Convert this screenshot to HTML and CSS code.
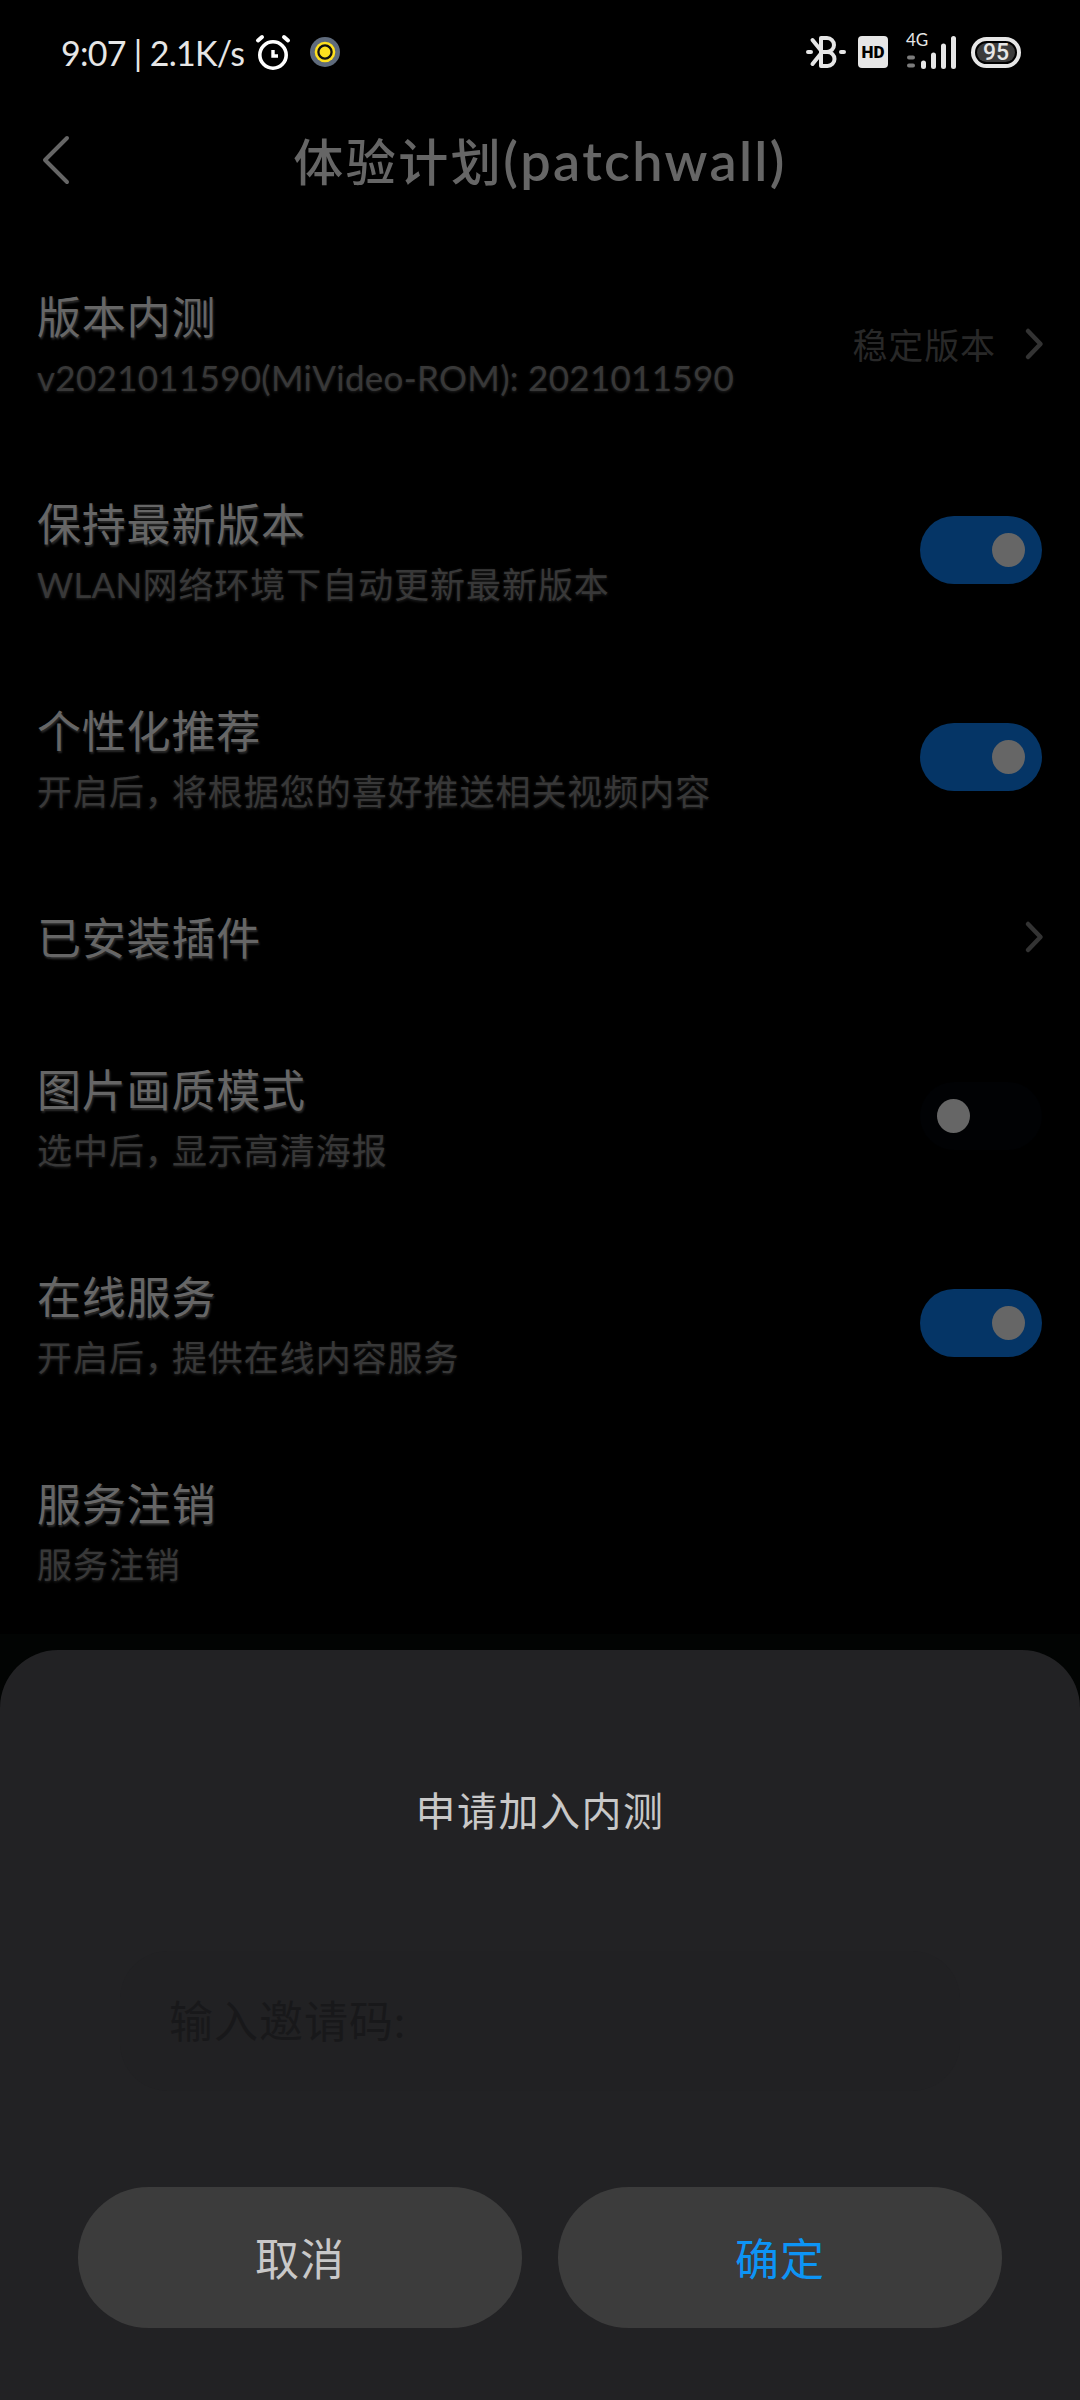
FILE: index.html
```html
<!DOCTYPE html>
<html lang="zh-CN">
<head>
    <meta charset="UTF-8">
    <meta name="viewport" content="width=device-width, initial-scale=1.0">
    <title>体验计划</title>
    <link rel="stylesheet" href="styles.css">
</head>
<body>
    <div class="status-bar">
        <span class="status-time">9:07 | 2.1K/s</span>
        <svg class="icon-alarm" width="36" height="38" viewBox="0 0 36 38" fill="none" stroke="#fff" stroke-linecap="round">
            <circle cx="18" cy="22" r="13.2" stroke-width="3.6"/>
            <path d="M3 7.5L7 4M33 7.5L29 4" stroke-width="4"/>
            <path d="M18 17v6h5" stroke-width="3.4" stroke-linecap="butt"/>
        </svg>
        <svg class="icon-app" width="30" height="30" viewBox="0 0 30 30">
            <circle cx="15" cy="15" r="15" fill="#5f6b7c"/>
            <circle cx="15" cy="15" r="10.3" fill="#ffe11f"/>
            <circle cx="15" cy="15" r="6.6" fill="#ffe11f" stroke="#111" stroke-width="2.3"/>
        </svg>
        <div class="status-icons">
            <svg width="40" height="34" viewBox="0 0 40 34" fill="none" stroke="#e6e6e6" stroke-width="4" stroke-linecap="round" stroke-linejoin="round">
                <path d="M6.5 5L15 15.500M6.500 29L15 18.500"/>
                <path d="M15 3v28h6.500a7 7 0 0 0 0-14H15M21 17a7 7 0 0 0 0-14H15"/>
                <path d="M2 17h3M35 17h3"/>
            </svg>
            <span class="hd">HD</span>
            <div class="signal">
                <span class="signal-type">4G</span>
                <svg width="50" height="34" viewBox="0 0 50 34" stroke="#e6e6e6" stroke-width="5" stroke-linecap="round">
                    <path d="M3 22.500h4M3 30.500h4" stroke="#7c7c7c" stroke-width="4"/>
                    <path d="M17.500 28v3.500M27.500 20v11.500M37.500 11v20.500M47.500 3.500v28"/>
                </svg>
            </div>
            <div class="battery"><span>95</span></div>
        </div>
    </div>

    <div class="header">
        <svg width="30" height="52" viewBox="0 0 30 52" fill="none" stroke="#666" stroke-width="4" stroke-linecap="round" stroke-linejoin="round">
            <path d="M26 4L4 26L26 48"/>
        </svg>
        <h1>体验计划<span class="latin">(patchwall)</span></h1>
    </div>

    <div class="settings">
        <div class="row">
            <div class="row-text">
                <div class="row-title">版本内测</div>
                <div class="row-desc version">v2021011590(MiVideo-ROM): 2021011590</div>
            </div>
            <div class="row-value">稳定版本</div>
            <svg class="arrow" width="20" height="34" viewBox="0 0 20 34"><path d="M4 4L16.500 17L4 30"/></svg>
        </div>
        <div class="row">
            <div class="row-text">
                <div class="row-title">保持最新版本</div>
                <div class="row-desc"><span class="wlan">WLAN</span>网络环境下自动更新最新版本</div>
            </div>
            <div class="toggle on"></div>
        </div>
        <div class="row">
            <div class="row-text">
                <div class="row-title">个性化推荐</div>
                <div class="row-desc">开启后<span class="comma">，</span>将根据您的喜好推送相关视频内容</div>
            </div>
            <div class="toggle on"></div>
        </div>
        <div class="row single">
            <div class="row-text">
                <div class="row-title">已安装插件</div>
            </div>
            <svg class="arrow" width="20" height="34" viewBox="0 0 20 34"><path d="M4 4L16.500 17L4 30"/></svg>
        </div>
        <div class="row">
            <div class="row-text">
                <div class="row-title">图片画质模式</div>
                <div class="row-desc">选中后<span class="comma">，</span>显示高清海报</div>
            </div>
            <div class="toggle"></div>
        </div>
        <div class="row">
            <div class="row-text">
                <div class="row-title">在线服务</div>
                <div class="row-desc">开启后<span class="comma">，</span>提供在线内容服务</div>
            </div>
            <div class="toggle on"></div>
        </div>
        <div class="row">
            <div class="row-text">
                <div class="row-title">服务注销</div>
                <div class="row-desc">服务注销</div>
            </div>
        </div>
    </div>

    <div class="sheet">
        <h2>申请加入内测</h2>
        <div class="code-input">输入邀请码:</div>
        <div class="buttons">
            <button class="btn">取消</button>
            <button class="btn confirm">确定</button>
        </div>
    </div>
</body>
</html>
```
FILE: styles.css
```css
* {
    box-sizing: border-box;
}

body {
    margin: 0;
    width: 1080px;
    height: 2400px;
    background-color: #020403;
    font-family: Lato, "Noto Sans CJK SC", sans-serif;
    color: #666;
    overflow: hidden;
    position: relative;
}

/* Status bar */
.status-bar {
    display: flex;
    align-items: center;
    height: 104px;
    padding: 0 59px 0 61px;
    background-color: #000;
    color: #e6e6e6;
}

.status-time {
    width: 194px;
    padding-top: 1px;
    font-size: 34px;
    line-height: 40px;
    letter-spacing: -0.7px;
    white-space: nowrap;
}

.icon-app {
    margin-left: 19px;
}

.status-icons {
    display: flex;
    align-items: center;
    margin-left: auto;
}

.hd {
    width: 30px;
    height: 32px;
    margin-left: 12px;
    border-radius: 4px;
    background-color: #e6e6e6;
    color: #000;
    font: 900 17px/32px Roboto, sans-serif;
    text-align: center;
}

.signal {
    position: relative;
    height: 34px;
    margin: 0 15px 0 18px;
}

.signal-type {
    position: absolute;
    left: 0;
    top: -5px;
    font-size: 17px;
    line-height: 20px;
}

.battery {
    display: flex;
    width: 50px;
    height: 31px;
    padding: 2px;
    border: 4px solid #e6e6e6;
    border-radius: 16px;
}

.battery span {
    flex: 1;
    border-radius: 10px;
    background-color: #3c3c3c;
    font: 500 23px/20px Roboto, sans-serif;
    text-align: center;
}

/* Page header */
.header {
    display: flex;
    align-items: center;
    height: 136px;
    padding: 0 41px 24px;
    background-color: #000;
}

.header h1 {
    flex: 1;
    margin: 0 30px 0 0;
    padding-top: 3px;
    font-size: 50px;
    font-weight: 500;
    line-height: 60px;
    letter-spacing: 2.5px;
    text-align: center;
    white-space: nowrap;
}

.header .latin {
    font-size: 54px;
    font-weight: 600;
    letter-spacing: 2.3px;
}

/* Settings list */
.settings {
    background-color: #000;
}

.row {
    display: flex;
    align-items: center;
    height: 207px;
    padding: 0 38px 0 37px;
}

.row.single {
    height: 152px;
}

.row-text {
    flex: 1;
    padding-top: 1px;
    white-space: nowrap;
}

.row-title {
    font-size: 44px;
    line-height: 66px;
    letter-spacing: 0.8px;
    text-shadow: 1px 2px 2px #2a2a2a;
}

.row-desc {
    font-size: 35px;
    line-height: 54px;
    letter-spacing: 0.95px;
    color: #383838;
    text-shadow: 0 1px 3px #222;
}

.row-desc.version {
    letter-spacing: 0.3px;
}

.wlan {
    letter-spacing: 0.2px;
}

.comma {
    letter-spacing: -8px;
}

.row-value {
    margin-right: 28px;
    font-size: 35px;
    letter-spacing: 0.9px;
    color: #282828;
}

.arrow {
    fill: none;
    stroke: #333;
    stroke-width: 4.5;
    stroke-linecap: round;
    stroke-linejoin: round;
    margin-right: -2px;
}

.toggle {
    display: flex;
    align-items: center;
    width: 122px;
    height: 68px;
    margin-bottom: 2px;
    padding: 0 17px;
    border-radius: 34px;
    background-color: #010204;
}

.toggle::before {
    content: "";
    width: 33px;
    height: 34px;
    border-radius: 50%;
    background-color: #666;
}

.toggle.on {
    justify-content: flex-end;
    background-color: #053566;
}

/* Bottom dialog */
.sheet {
    position: absolute;
    left: 0;
    right: 0;
    bottom: 0;
    height: 750px;
    padding: 131px 78px 72px;
    border-radius: 58px 58px 0 0;
    background-color: #222224;
    display: flex;
    flex-direction: column;
}

.sheet h2 {
    margin: 0;
    font-size: 40px;
    font-weight: 400;
    line-height: 60px;
    letter-spacing: 1.5px;
    text-align: center;
    color: #c8c8c8;
}

.code-input {
    height: 140px;
    margin: 110px 42px 0;
    padding: 0 49px;
    border-radius: 48px;
    background-color: #212123;
    font-size: 44px;
    line-height: 140px;
    letter-spacing: 1px;
    color: #18181a;
}

.buttons {
    display: flex;
    gap: 36px;
    margin-top: auto;
}

.btn {
    flex: 1;
    height: 141px;
    padding: 0 0 1px;
    border: none;
    border-radius: 71px;
    background-color: #3c3c3c;
    font-family: inherit;
    font-size: 44px;
    letter-spacing: 1px;
    color: #c8c8c8;
}

.btn.confirm {
    color: #0d94f5;
}
```
